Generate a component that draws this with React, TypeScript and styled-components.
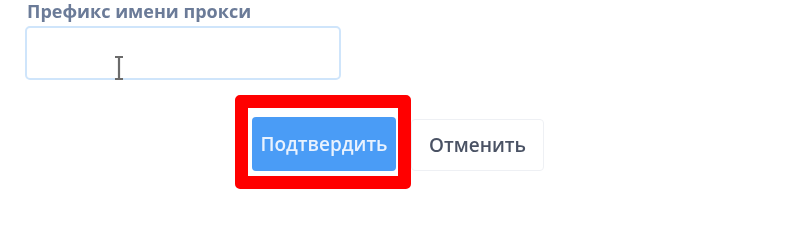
import styled, { createGlobalStyle } from "styled-components";

const GlobalStyle = createGlobalStyle`
  body {
    margin: 0;
    background: #ffffff;
    font-family: "Open Sans", "Liberation Sans", sans-serif;
  }
`;

const Wrapper = styled.div`
  width: 791px;
  height: 206px;
  overflow: hidden;
  background: #ffffff;
`;

const Field = styled.div`
  display: flex;
  flex-direction: column;
  padding-left: 27px;
  padding-top: 1px;
`;

const Label = styled.div`
  font-size: 18px;
  font-weight: 700;
  color: #6b7b98;
  line-height: 20px;
  margin-bottom: 5px;
  filter: blur(0.4px);
`;

const InputBox = styled.div`
  position: relative;
  width: 316px;
  height: 54px;
  box-sizing: border-box;
  border: 2px solid #cfe5fb;
  border-radius: 5px;
  margin-left: -2px;
`;

const Cursor = styled.svg`
  position: absolute;
  left: 87px;
  top: 28px;
`;

const Actions = styled.div`
  display: flex;
  align-items: flex-start;
  padding-left: 235px;
  margin-top: 15px;
`;

const Highlight = styled.div`
  border: 13px solid #ff0000;
  border-radius: 5px;
  padding: 9px 2px 5px 4px;
`;

const Button = styled.button<{ $primary?: boolean }>`
  height: ${(p) => (p.$primary ? "54px" : "52px")};
  padding: 0;
  width: ${(p) => (p.$primary ? "144px" : "133px")};
  border-radius: 4px;
  font-family: "Open Sans", "Liberation Sans", sans-serif;
  font-size: 19px;
  font-weight: 600;
  border: ${(p) => (p.$primary ? "none" : "1px solid #eef0f4")};
  background: ${(p) => (p.$primary ? "#4a9cf6" : "#ffffff")};
  color: ${(p) => (p.$primary ? "#e9f2fe" : "#4a5264")};
  margin-top: ${(p) => (p.$primary ? "0" : "24px")};
  filter: blur(0.4px);
`;

export default function App() {
  return (
    <Wrapper>
      <GlobalStyle />
      <Field>
        <Label>Префикс имени прокси</Label>
        <InputBox>
          <Cursor width="10" height="24" viewBox="0 0 10 24">
            <path
              d="M1 1h8M5 1v22M1 23h8"
              stroke="#6b6b6b"
              strokeWidth="2.2"
              fill="none"
            />
          </Cursor>
        </InputBox>
      </Field>
      <Actions>
        <Highlight>
          <Button $primary>Подтвердить</Button>
        </Highlight>
        <Button>Отменить</Button>
      </Actions>
    </Wrapper>
  );
}
